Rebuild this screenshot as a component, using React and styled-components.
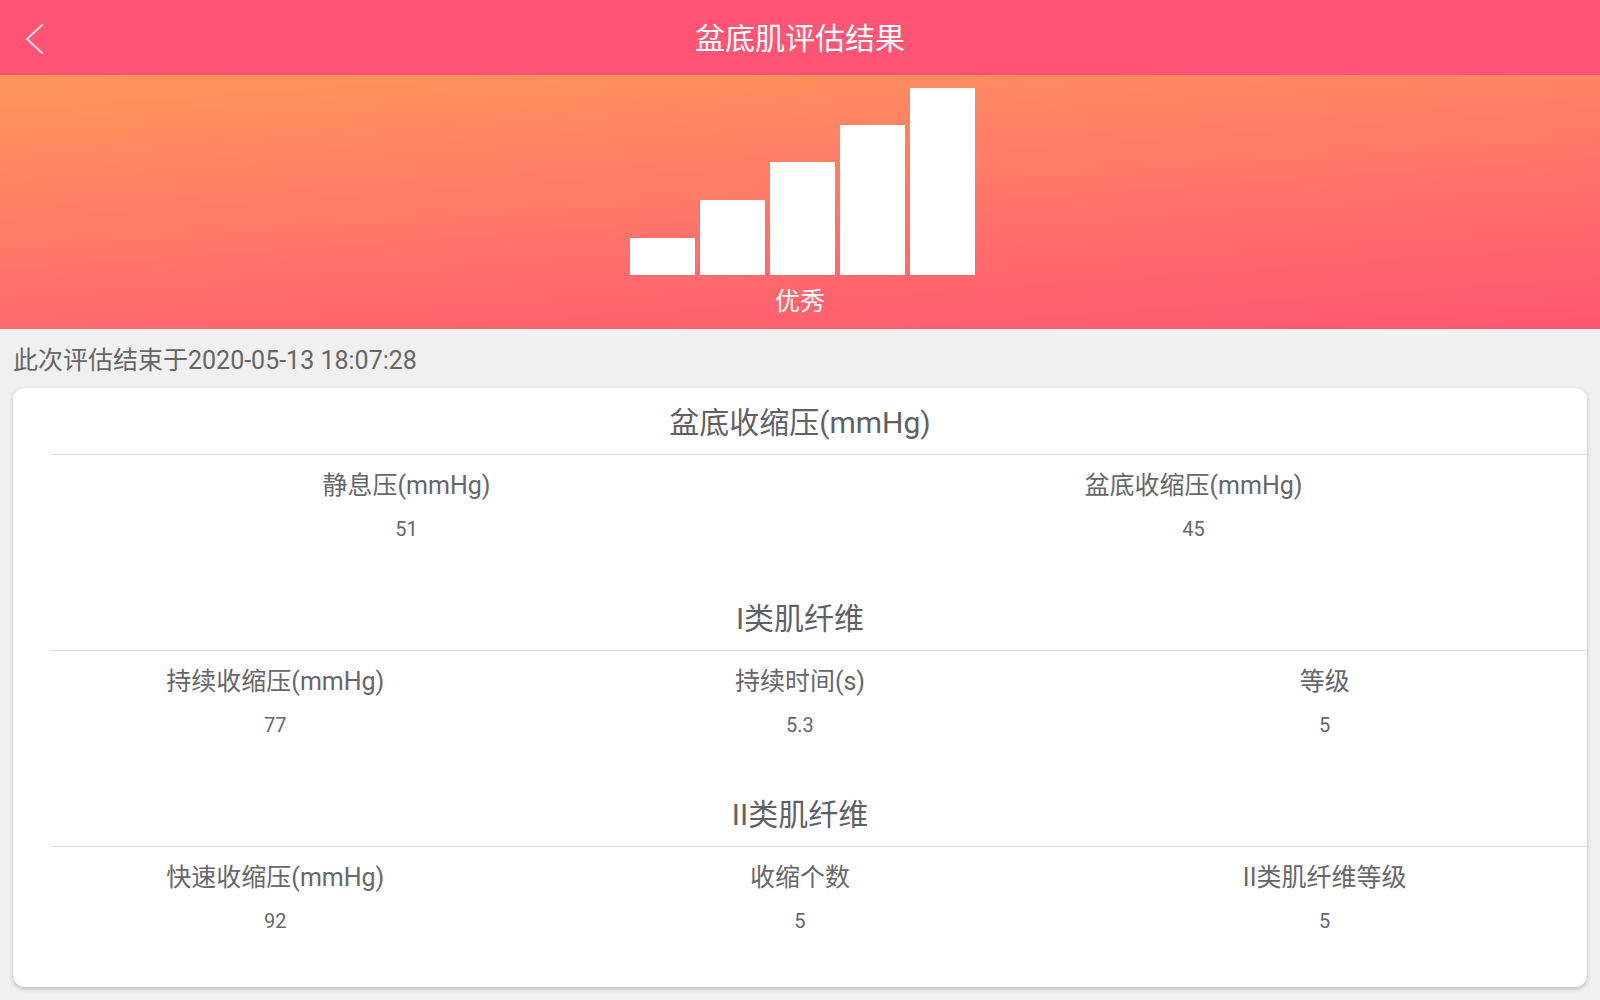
import React from "react";
import styled, { createGlobalStyle } from "styled-components";

const GlobalStyle = createGlobalStyle`
  html, body {
    margin: 0;
    padding: 0;
    background: #f0f0f0;
    font-family: Roboto, "Noto Sans CJK SC", sans-serif;
  }
`;

const bars = [37, 75, 113, 150, 187];

const sections = [
  {
    title: "盆底收缩压(mmHg)",
    items: [
      { label: "静息压(mmHg)", value: "51" },
      { label: "盆底收缩压(mmHg)", value: "45" },
    ],
  },
  {
    title: "I类肌纤维",
    items: [
      { label: "持续收缩压(mmHg)", value: "77" },
      { label: "持续时间(s)", value: "5.3" },
      { label: "等级", value: "5" },
    ],
  },
  {
    title: "II类肌纤维",
    items: [
      { label: "快速收缩压(mmHg)", value: "92" },
      { label: "收缩个数", value: "5" },
      { label: "II类肌纤维等级", value: "5" },
    ],
  },
];

const App = () => {
  return (
    <Page>
      <GlobalStyle />
      <Header>
        <BackButton>
          <svg width="20" height="32" viewBox="0 0 20 32">
            <polyline
              points="17,2 2,16 17,30"
              fill="none"
              stroke="rgba(255,255,255,0.78)"
              strokeWidth="2"
              strokeLinecap="round"
              strokeLinejoin="round"
            />
          </svg>
        </BackButton>
        <Title>盆底肌评估结果</Title>
        <span />
      </Header>
      <Hero>
        <Chart>
          {bars.map((h) => (
            <Bar key={h} style={{ height: h }} />
          ))}
        </Chart>
        <Grade>优秀</Grade>
      </Hero>
      <DateLine>此次评估结束于2020-05-13 18:07:28</DateLine>
      <Card>
        {sections.map((s) => (
          <Section key={s.title}>
            <SectionTitle>{s.title}</SectionTitle>
            <Divider />
            <Row cols={s.items.length}>
              {s.items.map((it) => (
                <Cell key={it.label}>
                  <Label>{it.label}</Label>
                  <Value>{it.value}</Value>
                </Cell>
              ))}
            </Row>
          </Section>
        ))}
      </Card>
    </Page>
  );
};

export default App;

const Page = styled.div`
  width: 1600px;
  min-height: 1000px;
  background: #f0f0f0;
  padding-bottom: 13px;
  box-sizing: border-box;
`;

const Header = styled.header`
  height: 75px;
  background: #ff5473;
  display: grid;
  grid-template-columns: 1fr auto 1fr;
  align-items: center;
`;

const BackButton = styled.div`
  display: flex;
  align-items: center;
  padding-left: 25px;
  padding-top: 2px;
`;

const Title = styled.h1`
  margin: 0;
  padding-top: 2px;
  font-size: 30px;
  font-weight: 400;
  color: #fff;
  line-height: 36px;
`;

const Hero = styled.section`
  height: 254px;
  box-sizing: border-box;
  padding-top: 13px;
  background: linear-gradient(176deg, #ff975a 0%, #ff7a68 45%, #ff5572 100%);
  display: flex;
  flex-direction: column;
  align-items: center;
`;

const Chart = styled.div`
  height: 187px;
  display: flex;
  align-items: flex-end;
  gap: 5px;
  margin-left: 5px;
`;

const Bar = styled.div`
  width: 65px;
  background: #fff;
`;

const Grade = styled.div`
  margin-top: 13px;
  font-size: 25px;
  line-height: 28px;
  color: #fff;
`;

const DateLine = styled.div`
  padding: 17px 13px 12px;
  font-size: 25px;
  line-height: 30px;
  color: #666;
`;

const Card = styled.div`
  margin: 0 13px;
  background: #fff;
  border-radius: 12px;
  box-shadow: 0 2px 4px rgba(0, 0, 0, 0.22);
  padding: 17px 0 54px;
  display: flex;
  flex-direction: column;
  gap: 60px;
`;

const Section = styled.div`
  display: flex;
  flex-direction: column;
`;

const SectionTitle = styled.h2`
  margin: 0;
  padding-bottom: 13px;
  text-align: center;
  font-size: 30px;
  line-height: 36px;
  font-weight: 400;
  color: #5f5f64;
`;

const Divider = styled.div`
  height: 1px;
  margin-left: 37px;
  background: #dedede;
`;

const Row = styled.div`
  display: grid;
  grid-template-columns: repeat(${(p) => p.cols}, 1fr);
  padding-top: 16px;
`;

const Cell = styled.div`
  display: flex;
  flex-direction: column;
  align-items: center;
  gap: 16px;
`;

const Label = styled.div`
  font-size: 25px;
  line-height: 30px;
  color: #66666b;
`;

const Value = styled.div`
  font-size: 20px;
  line-height: 24px;
  color: #66666b;
`;
